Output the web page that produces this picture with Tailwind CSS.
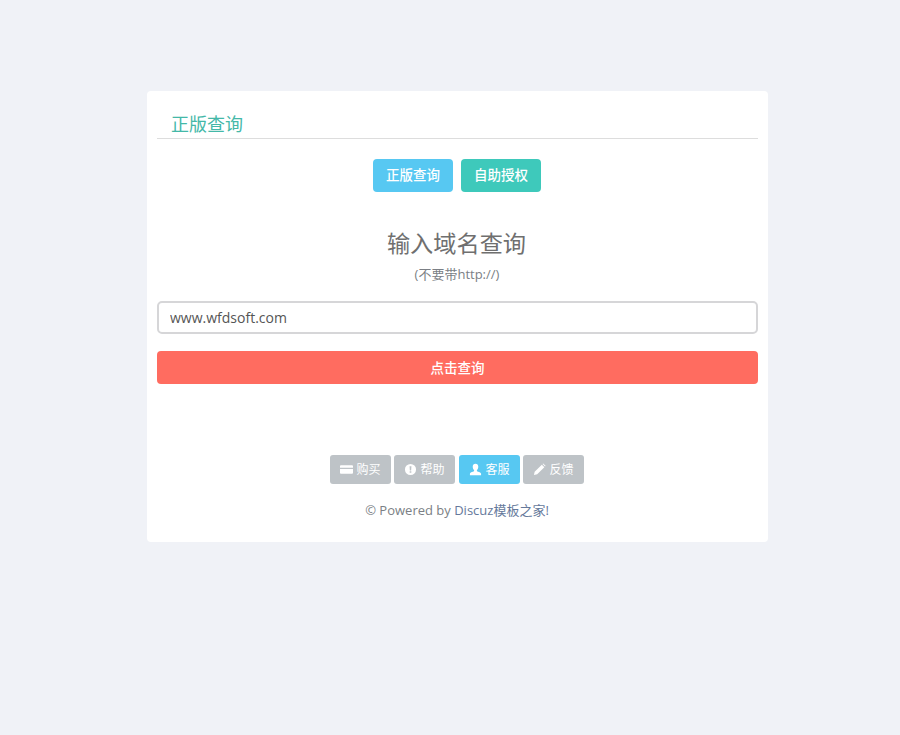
<!DOCTYPE html>
<html lang="zh">
<head>
    <meta charset="UTF-8" />
    <title>正版查询</title>
    <script src="https://cdn.jsdelivr.net/npm/@tailwindcss/browser@4"></script>
</head>
<body class="bg-[#f0f2f7] h-[735px] overflow-hidden pt-[91px] font-['Open_Sans','Noto_Sans_CJK_SC',sans-serif] text-[#676a6c]">
    <div class="w-[621px] h-[451px] ml-[147px] bg-white rounded-[4px] px-[10px] pt-[20px]">
        <div class="h-[28px] border-b border-[#ddd] pl-[14px]">
            <h3 class="text-[18px] leading-[26px] text-[#44b8a8]">正版查询</h3>
        </div>
        <div class="flex justify-center gap-[8px] mt-[20px] pr-[1px]">
            <a class="w-[80px] h-[33px] flex items-center justify-center rounded-[4px] bg-[#57c8f2] text-white text-[13.5px] font-medium">正版查询</a>
            <a class="w-[80px] h-[33px] flex items-center justify-center rounded-[4px] bg-[#3ec9bb] text-white text-[13.5px] font-medium">自助授权</a>
        </div>
        <h2 class="text-center text-[23.2px] leading-[32px] mt-[35px] pr-[2px] text-[#6f6f6f]">输入域名查询</h2>
        <p class="text-center text-[13px] leading-[18px] mt-[6px] pr-[1px] text-[#7b7f85]">(不要带http://)</p>
        <input type="text" value="www.wfdsoft.com" class="block w-full h-[33px] mt-[18px] px-[11px] border-2 border-[#d6d6d8] rounded-[5px] text-[14px] text-[#555] outline-none" />
        <button class="block w-full h-[33px] mt-[17px] pt-[1px] rounded-[4px] bg-[#ff6c60] text-white text-[13.5px] font-medium">点击查询</button>
        <div class="flex justify-center gap-[3px] mt-[71px] pr-[1px]">
            <a class="w-[61px] h-[29px] flex items-center justify-center gap-[3px] rounded-[3px] bg-[#bec3c7] text-white text-[12px]">
                <svg class="w-[13px] h-[13px]" viewBox="0 0 14 14" fill="currentColor"><path fill-rule="evenodd" d="M1 2.500h12a1 1 0 0 1 1 1v7a1 1 0 0 1-1 1H1a1 1 0 0 1-1-1v-7a1 1 0 0 1 1-1zM0 5v1.500h14V5z"/></svg>
                购买
            </a>
            <a class="w-[61px] h-[29px] flex items-center justify-center gap-[3px] rounded-[3px] bg-[#bec3c7] text-white text-[12px] mr-[1px]">
                <svg class="w-[13px] h-[13px]" viewBox="0 0 14 14" fill="currentColor"><path fill-rule="evenodd" d="M7 1a6 6 0 1 1 0 12A6 6 0 0 1 7 1zM6 3.500l.3 4.500h1.400L8 3.500zM6.100 9v1.600h1.800V9z"/></svg>
                帮助
            </a>
            <a class="w-[61px] h-[29px] flex items-center justify-center gap-[3px] rounded-[3px] bg-[#57c8f2] text-white text-[12px]">
                <svg class="w-[13px] h-[13px]" viewBox="0 0 14 14" fill="currentColor"><path d="M7 .8c1.900 0 3 1.400 3 3.200 0 1.500-.7 3-1.500 3.700v1c0 .5 4.500 1.300 4.500 3v1.500H1v-1.500c0-1.700 4.500-2.500 4.500-3v-1C4.700 7 4 5.500 4 4 4 2.200 5.100.8 7 .8z"/></svg>
                客服
            </a>
            <a class="w-[61px] h-[29px] flex items-center justify-center gap-[3px] rounded-[3px] bg-[#bec3c7] text-white text-[12px]">
                <svg class="w-[13px] h-[13px]" viewBox="0 0 14 14" fill="currentColor"><path d="M1 13l.8-3.500L9.500 1.800l2.700 2.700-7.700 7.700zM10.300 1l.7-.5 2.500 2.500-.5.700z"/></svg>
                反馈
            </a>
        </div>
        <p class="text-center text-[13px] leading-[18px] mt-[17px] pr-[1px] text-[#7b7f85]">© Powered by <a class="text-[#65799b]">Discuz模板之家!</a></p>
    </div>
</body>
</html>
